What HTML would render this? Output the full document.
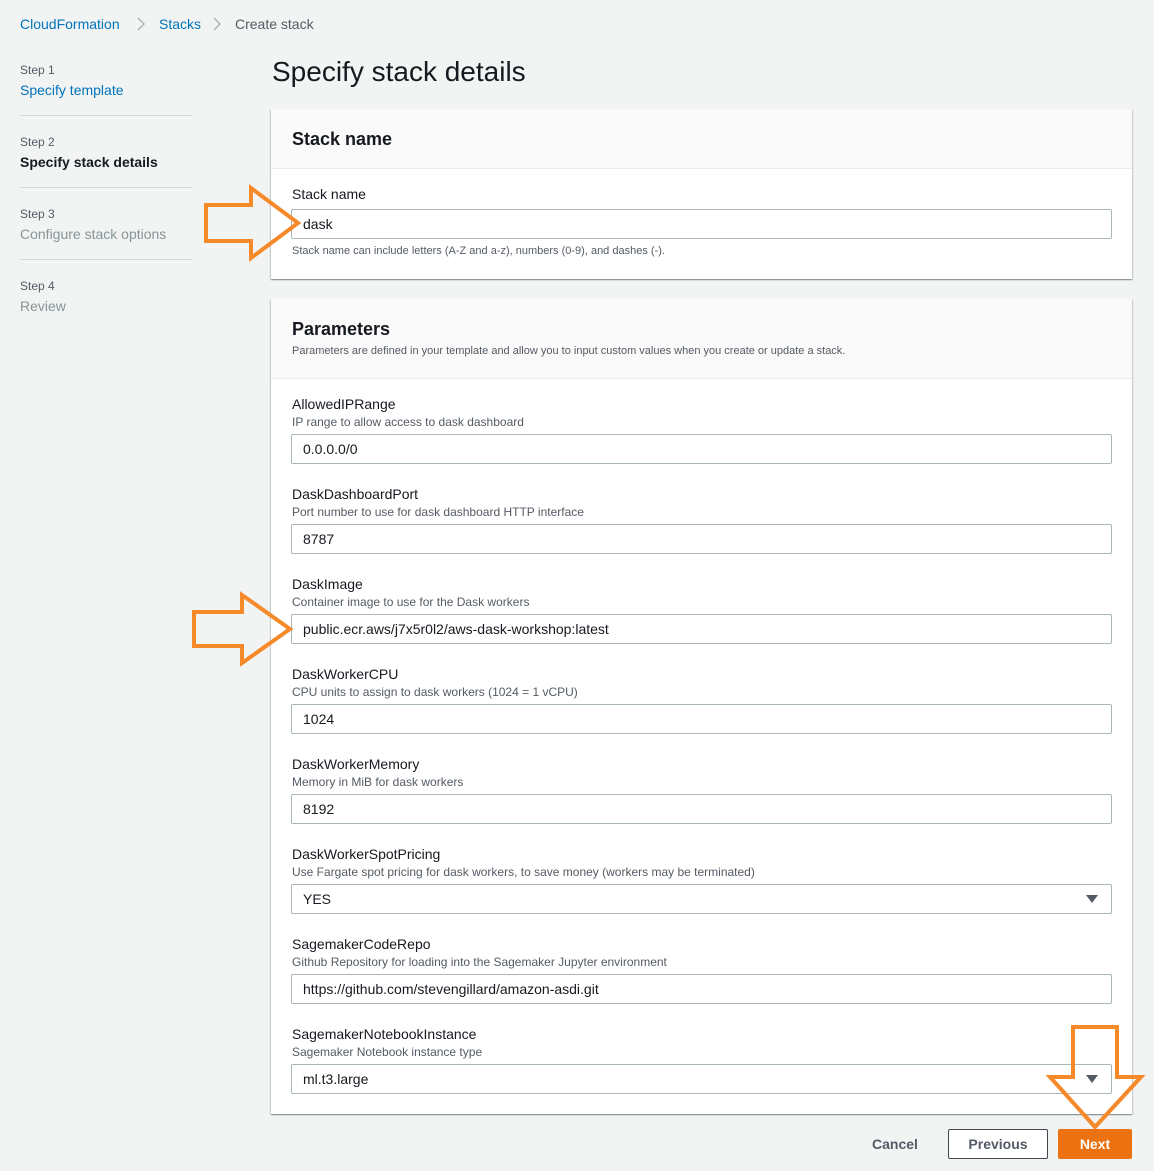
<!DOCTYPE html><html><head><style>
body{margin:0;width:1154px;height:1171px;background:#f2f3f3;font-family:"Liberation Sans",sans-serif;position:relative;overflow:hidden;color:#16191f}
.a{position:absolute;white-space:nowrap}
.bc{top:16px;font-size:14px}
.lnk{color:#0073bb}
.st{font-size:12px;color:#545b64}
.sn{font-size:14px}
.hr{position:absolute;left:20px;width:172px;height:1px;background:#d5dbdb}
.panel{position:absolute;left:271px;width:861px;background:#fff;box-shadow:0 1px 1px rgba(0,28,36,.3),1px 1px 1px rgba(0,28,36,.15),-1px 1px 1px rgba(0,28,36,.15)}
.ph{background:#fafafa;border-bottom:1px solid #eaeded}
.lab{font-size:14px;left:292px}
.desc{font-size:12px;color:#545b64;left:292px}
.in{position:absolute;left:291px;width:819px;height:28px;border:1px solid #aab7b8;border-radius:2px;background:#fff;font-size:14px;line-height:28px;text-indent:11px}
.tri{position:absolute;right:13px;top:10px;width:0;height:0;border-left:6px solid transparent;border-right:6px solid transparent;border-top:8px solid #545b64}
</style></head><body>
<div class="a bc lnk" style="left:20px">CloudFormation</div>
<svg class="a" style="left:136px;top:16px" width="10" height="16" fill="none" stroke="#aab7b8" stroke-width="1.5"><path d="M2 2 L8 8 L2 14"/></svg>
<div class="a bc lnk" style="left:159px">Stacks</div>
<svg class="a" style="left:212px;top:16px" width="10" height="16" fill="none" stroke="#aab7b8" stroke-width="1.5"><path d="M2 2 L8 8 L2 14"/></svg>
<div class="a bc" style="left:235px;color:#545b64">Create stack</div>

<div class="a st" style="left:20px;top:63px">Step 1</div><div class="a sn lnk" style="left:20px;top:82px">Specify template</div>
<div class="hr" style="top:115px"></div>
<div class="a st" style="left:20px;top:135px">Step 2</div><div class="a sn" style="left:20px;top:154px;font-weight:bold">Specify stack details</div>
<div class="hr" style="top:187px"></div>
<div class="a st" style="left:20px;top:207px">Step 3</div><div class="a sn" style="left:20px;top:226px;color:#879596">Configure stack options</div>
<div class="hr" style="top:259px"></div>
<div class="a st" style="left:20px;top:279px">Step 4</div><div class="a sn" style="left:20px;top:298px;color:#879596">Review</div>

<div class="a" style="left:272px;top:56px;font-size:28px">Specify stack details</div>

<div class="panel" style="top:109px;height:170px"><div class="ph" style="height:59px"></div></div>
<div class="a" style="left:292px;top:129px;font-size:18px;font-weight:bold">Stack name</div>
<div class="a lab" style="top:186px">Stack name</div>
<div class="in" style="top:209px">dask</div>
<div class="a desc" style="top:245px;font-size:11px">Stack name can include letters (A-Z and a-z), numbers (0-9), and dashes (-).</div>

<div class="panel" style="top:299px;height:815px"><div class="ph" style="height:79px"></div></div>
<div class="a" style="left:292px;top:319px;font-size:18px;font-weight:bold">Parameters</div>
<div class="a desc" style="top:345px;font-size:11px">Parameters are defined in your template and allow you to input custom values when you create or update a stack.</div>

<div class="a lab" style="top:396px">AllowedIPRange</div><div class="a desc" style="top:415px">IP range to allow access to dask dashboard</div><div class="in" style="top:434px">0.0.0.0/0</div>
<div class="a lab" style="top:486px">DaskDashboardPort</div><div class="a desc" style="top:505px">Port number to use for dask dashboard HTTP interface</div><div class="in" style="top:524px">8787</div>
<div class="a lab" style="top:576px">DaskImage</div><div class="a desc" style="top:595px">Container image to use for the Dask workers</div><div class="in" style="top:614px">public.ecr.aws/j7x5r0l2/aws-dask-workshop:latest</div>
<div class="a lab" style="top:666px">DaskWorkerCPU</div><div class="a desc" style="top:685px">CPU units to assign to dask workers (1024 = 1 vCPU)</div><div class="in" style="top:704px">1024</div>
<div class="a lab" style="top:756px">DaskWorkerMemory</div><div class="a desc" style="top:775px">Memory in MiB for dask workers</div><div class="in" style="top:794px">8192</div>
<div class="a lab" style="top:846px">DaskWorkerSpotPricing</div><div class="a desc" style="top:865px">Use Fargate spot pricing for dask workers, to save money (workers may be terminated)</div><div class="in" style="top:884px">YES<div class="tri"></div></div>
<div class="a lab" style="top:936px">SagemakerCodeRepo</div><div class="a desc" style="top:955px">Github Repository for loading into the Sagemaker Jupyter environment</div><div class="in" style="top:974px">https://github.com/stevengillard/amazon-asdi.git</div>
<div class="a lab" style="top:1026px">SagemakerNotebookInstance</div><div class="a desc" style="top:1045px">Sagemaker Notebook instance type</div><div class="in" style="top:1064px">ml.t3.large<div class="tri"></div></div>

<div class="a" style="left:872px;top:1136px;font-size:14px;font-weight:bold;color:#545b64">Cancel</div>
<div class="a" style="left:948px;top:1129px;width:98px;height:28px;border:1px solid #414750;border-radius:2px;background:#fff;font-size:14px;font-weight:bold;color:#545b64;text-align:center;line-height:28px">Previous</div>
<div class="a" style="left:1058px;top:1129px;width:74px;height:30px;border-radius:2px;background:#ec7211;font-size:14px;font-weight:bold;color:#fff;text-align:center;line-height:30px">Next</div>

<svg class="a" style="left:0;top:0" width="1154" height="1171" fill="none" stroke="#f68a2b" stroke-width="4">
<polygon points="206,205 251,205 251,188 298,223 251,258 251,241 206,241"/>
<polygon points="194,612 242,612 242,595 290,629 242,663 242,646 194,646"/>
<polygon points="1073,1027 1117,1027 1117,1077 1141,1077 1095,1127 1050,1077 1073,1077"/>
</svg>
</body></html>
